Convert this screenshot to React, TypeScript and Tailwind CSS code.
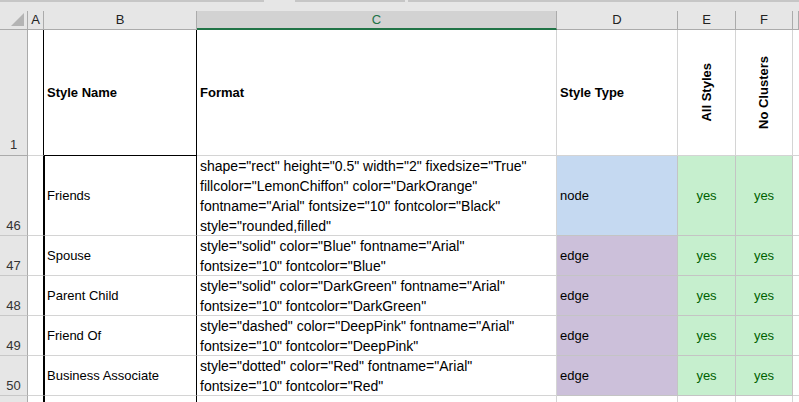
const font = { fontFamily: '"Liberation Sans", Arial, sans-serif' };

const rows = [
  {
    n: "46",
    h: "h-[80px]",
    name: "Friends",
    format: [
      'shape="rect" height="0.5" width="2" fixedsize="True"',
      'fillcolor="LemonChiffon" color="DarkOrange"',
      'fontname="Arial" fontsize="10" fontcolor="Black"',
      'style="rounded,filled"',
    ],
    type: "node",
  },
  {
    n: "47",
    h: "h-[40px]",
    name: "Spouse",
    format: ['style="solid" color="Blue" fontname="Arial"', 'fontsize="10" fontcolor="Blue"'],
    type: "edge",
  },
  {
    n: "48",
    h: "h-[40px]",
    name: "Parent Child",
    format: ['style="solid" color="DarkGreen" fontname="Arial"', 'fontsize="10" fontcolor="DarkGreen"'],
    type: "edge",
  },
  {
    n: "49",
    h: "h-[40px]",
    name: "Friend Of",
    format: ['style="dashed" color="DeepPink" fontname="Arial"', 'fontsize="10" fontcolor="DeepPink"'],
    type: "edge",
  },
  {
    n: "50",
    h: "h-[40px]",
    name: "Business Associate",
    format: ['style="dotted" color="Red" fontname="Arial"', 'fontsize="10" fontcolor="Red"'],
    type: "edge",
  },
];

const cols = "grid grid-cols-[28px_16px_153px_360px_121px_58px_57px_1fr]";

function HeaderCell({ children, active }: { children?: React.ReactNode; active?: boolean }) {
  return (
    <div
      className={
        active
          ? "flex h-[19px] items-center justify-center border-r border-r-[#ababab] border-b-2 border-b-[#217346] bg-[#d2d2d2] text-[#217346]"
          : "flex h-[19px] items-center justify-center border-r border-b border-[#ababab] bg-[#e6e6e6] text-[#222]"
      }
    >
      {children}
    </div>
  );
}

export default function App() {
  return (
    <div className="h-[402px] w-[799px] overflow-hidden bg-white text-[13px] text-black" style={font}>
      {/* strip under the formula bar */}
      <div className="flex h-[11px] bg-[#e6e6e6]">
        <div className="h-[2px] w-[264px] bg-[#c6c6c6]" />
        <div className="ml-[31px] h-[2px] w-[110px] bg-[#c6c6c6]" />
        <div className="ml-[3px] h-[2px] flex-1 bg-[#c6c6c6]" />
      </div>

      {/* column letters */}
      <div className={cols}>
        <div className="relative h-[19px] border-r border-b border-[#ababab] bg-[#e6e6e6]">
          <div className="absolute right-[3px] bottom-[3px] h-0 w-0 border-t-[13px] border-l-[13px] border-t-transparent border-l-transparent border-r-0 border-b-[13px] border-b-[#b4b4b4]" />
        </div>
        <HeaderCell>A</HeaderCell>
        <HeaderCell>B</HeaderCell>
        <HeaderCell active>C</HeaderCell>
        <HeaderCell>D</HeaderCell>
        <HeaderCell>E</HeaderCell>
        <HeaderCell>F</HeaderCell>
        <HeaderCell />
      </div>

      {/* row 1: titles */}
      <div className={cols + " h-[126px]"}>
        <div className="flex items-end justify-center border-r border-b border-[#ababab] bg-[#e6e6e6] pb-[1px] text-[#333]">
          1
        </div>
        <div className="border-r border-b border-r-black border-b-[#d4d4d4]" />
        <div className="flex items-center border-r border-b border-r-black border-b-black pl-[3px] font-bold">
          Style Name
        </div>
        <div className="flex items-center border-r border-b border-[#d4d4d4] pl-[3px] font-bold">Format</div>
        <div className="flex items-center border-r border-b border-[#d4d4d4] pl-[3px] font-bold">Style Type</div>
        <div className="flex items-center justify-center border-r border-b border-[#d4d4d4]">
          <span className="rotate-180 font-bold [writing-mode:vertical-rl]">All Styles</span>
        </div>
        <div className="flex items-center justify-center border-r border-b border-[#d4d4d4]">
          <span className="rotate-180 font-bold [writing-mode:vertical-rl]">No Clusters</span>
        </div>
        <div className="border-b border-[#d4d4d4]" />
      </div>

      {/* data rows */}
      {rows.map((r) => (
        <div key={r.n} className={cols + " " + r.h}>
          <div className="flex items-end justify-center border-r border-b border-r-[#ababab] border-b-[#c8c8c8] bg-[#e6e6e6] text-[#333]">
            {r.n}
          </div>
          <div className="border-r border-b border-r-black border-b-[#d4d4d4]" />
          <div className="flex items-center border-l border-r border-b border-l-black border-r-black border-b-[#d4d4d4] pl-[2px]">
            {r.name}
          </div>
          <div className="flex flex-col justify-end overflow-hidden border-r border-b border-[#d4d4d4] pl-[3px] text-[14px] leading-[20px]">
            {r.format.map((line) => (
              <div key={line} className="translate-y-[1px] whitespace-nowrap">
                {line}
              </div>
            ))}
          </div>
          <div
            className={
              (r.type === "node" ? "bg-[#c5d9f1]" : "bg-[#ccc0da]") +
              " flex items-center border-r border-b border-[#c4c4c4] pl-[3px]"
            }
          >
            {r.type}
          </div>
          <div className="flex items-center justify-center border-r border-b border-[#c4c4c4] bg-[#c6efce] text-[#006100]">
            yes
          </div>
          <div className="flex items-center justify-center border-r border-b border-[#c4c4c4] bg-[#c6efce] text-[#006100]">
            yes
          </div>
          <div className="border-b border-[#d4d4d4]" />
        </div>
      ))}

      {/* row 51, cut off */}
      <div className={cols + " h-[10px]"}>
        <div className="border-r border-[#ababab] bg-[#e6e6e6]" />
        <div className="border-r border-black" />
        <div className="border-l border-r border-black" />
        <div className="border-r border-[#d4d4d4]" />
        <div className="border-r border-[#d4d4d4]" />
        <div className="border-r border-[#d4d4d4]" />
        <div className="border-r border-[#d4d4d4]" />
        <div />
      </div>
    </div>
  );
}
